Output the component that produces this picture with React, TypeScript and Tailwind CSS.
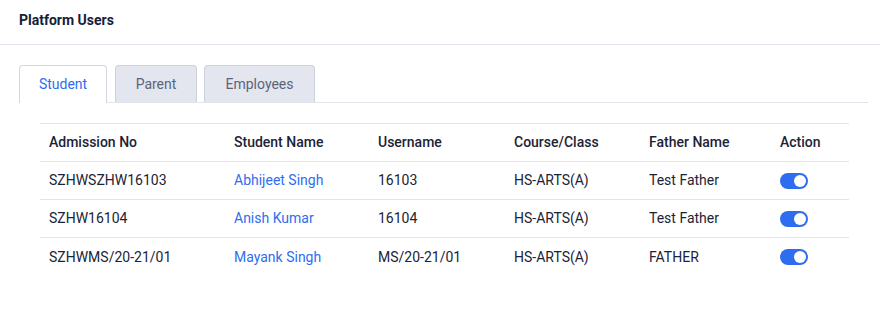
import React from "react";

const rows = [
  { adm: "SZHWSZHW16103", name: "Abhijeet Singh", user: "16103", course: "HS-ARTS(A)", father: "Test Father" },
  { adm: "SZHW16104", name: "Anish Kumar", user: "16104", course: "HS-ARTS(A)", father: "Test Father" },
  { adm: "SZHWMS/20-21/01", name: "Mayank Singh", user: "MS/20-21/01", course: "HS-ARTS(A)", father: "FATHER" },
];

function Toggle() {
  return (
    <div className="flex h-4 w-7 items-center justify-end rounded-full bg-[#2f6df0] pr-[2px]">
      <div className="h-3 w-3 rounded-full bg-white" />
    </div>
  );
}

export default function App() {
  return (
    <div className="h-[321px] w-[880px] bg-white text-[#1b2436]" style={{ fontFamily: "Roboto, 'Liberation Sans', sans-serif" }}>
      <div className="flex h-[45px] items-center border-b border-[#e2e4ec] px-[19px] pb-[4px]">
        <span className="text-[14px] font-bold text-[#14213a]">Platform Users</span>
      </div>
      <div className="px-[19px] pt-[20px]">
        <div className="mr-[-7px] flex border-b border-[#e2e4ec]">
          <div className="mb-[-1px] flex h-[38px] w-[88px] items-center justify-center rounded-t-[4px] border border-b-0 border-[#d3d6e0] bg-white text-[14px] text-[#2f6df0]">
            Student
          </div>
          <div className="ml-[8px] flex h-[37px] w-[82px] items-center justify-center rounded-t-[4px] border border-b-0 border-[#cdd1dc] bg-[#e3e6ef] text-[14px] text-[#5b6479]">
            Parent
          </div>
          <div className="ml-[7px] flex h-[37px] w-[111px] items-center justify-center rounded-t-[4px] border border-b-0 border-[#cdd1dc] bg-[#e3e6ef] text-[14px] text-[#5b6479]">
            Employees
          </div>
        </div>
        <div className="pl-[21px] pr-[12px] pt-[20px]">
          <div className="border-t border-[#e2e4ec]">
            <div className="grid h-[38px] grid-cols-[185px_144px_136px_135px_131px_1fr] items-center border-b border-[#e2e4ec] pl-[9px] text-[14px] font-medium text-[#1b2436]">
              <div>Admission No</div>
              <div>Student Name</div>
              <div>Username</div>
              <div>Course/Class</div>
              <div>Father Name</div>
              <div>Action</div>
            </div>
            {rows.map((r, i) => (
              <div
                key={i}
                className={`grid h-[38px] grid-cols-[185px_144px_136px_135px_131px_1fr] items-center pl-[9px] text-[14px] text-[#1b2436] ${i < rows.length - 1 ? "border-b border-[#e2e4ec]" : ""}`}
              >
                <div>{r.adm}</div>
                <div className="text-[#2f6df0]">{r.name}</div>
                <div>{r.user}</div>
                <div>{r.course}</div>
                <div>{r.father}</div>
                <div>
                  <Toggle />
                </div>
              </div>
            ))}
          </div>
        </div>
      </div>
    </div>
  );
}
